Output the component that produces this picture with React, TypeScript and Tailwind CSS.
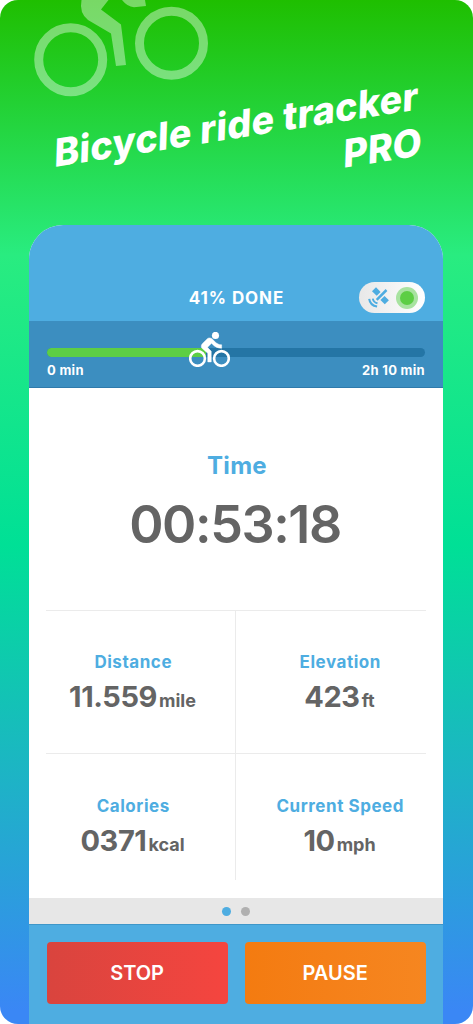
import React from 'react'

const stats = [
    { label: 'Distance', value: '11.559', unit: 'mile' },
    { label: 'Elevation', value: '423', unit: 'ft' },
    { label: 'Calories', value: '0371', unit: 'kcal' },
    { label: 'Current Speed', value: '10', unit: 'mph' },
]

const progress = 42

function Cyclist({ className }: { className?: string }) {
    return (
        <svg viewBox="0 1.5 24 20.5" className={className} fill="none">
            <circle cx="5" cy="17" r="4.3" stroke="currentColor" strokeWidth="1.5" />
            <circle cx="19" cy="17" r="4.3" stroke="currentColor" strokeWidth="1.5" />
            <circle cx="15.5" cy="3.5" r="2.1" fill="currentColor" />
            <path
                d="M10.8 10.5l2.4-2.4.8.8c1.3 1.3 3 2.1 5.1 2.1V9c-1.5 0-2.7-.6-3.6-1.5l-1.9-1.9c-.5-.4-1-.6-1.6-.6s-1.1.2-1.4.6L7.8 8.4c-.4.4-.6.9-.6 1.4 0 .6.2 1.1.6 1.4L11 14v5h2v-6.2z"
                fill="currentColor"
                stroke="currentColor"
                strokeWidth="0.3"
            />
        </svg>
    )
}

function Satellite({ className }: { className?: string }) {
    return (
        <svg viewBox="0 0 21 21" className={className}>
            <g fill="currentColor">
                <path d="M4 4.3L8 .3l4.600 4.600-3.900 3.900z" />
                <path d="M12.400 13l4.100-4.100 4.400 4.400-4.100 4z" />
            </g>
            <g fill="none" stroke="currentColor">
                <path d="M18.5 3L8.7 12.8" strokeWidth="2.5" />
                <path d="M4.8 11.6q.8 3.9 4.7 4.7" strokeWidth="1.9" />
                <path d="M1.2 11.8q.9 6.7 7.9 7.7" strokeWidth="2.1" />
            </g>
        </svg>
    )
}

export default function App() {
    return (
        <div className="h-[1024px] w-[473px] bg-white font-['Inter',sans-serif]">
            <div className="relative flex h-full flex-col overflow-hidden rounded-[18px] bg-[linear-gradient(180deg,#1fbf00_0px,#29ec80_255px,#00e096_545px,#3a87f5_1010px)]">
                <svg viewBox="0 0 240 110" className="absolute left-0 top-0 h-[110px] w-[240px] text-white/40" fill="none">
                    <circle cx="70.7" cy="59.8" r="32" stroke="currentColor" strokeWidth="9" />
                    <circle cx="171.5" cy="43.3" r="32" stroke="currentColor" strokeWidth="9" />
                    <path d="M81.5 0Q79 13 88 20L111 33.5L116 66L126 65L121 24.5L101 9.5L108.5 0Z" fill="currentColor" />
                    <path d="M122 0Q127 6.5 134 7.3L146 6L145 0Z" fill="currentColor" />
                </svg>

                <div className="h-[225px] shrink-0 pt-[101px]">
                    <h1 className="ml-[51px] w-[374px] origin-center -rotate-[9deg] -skew-x-[11deg] whitespace-nowrap text-[38px] font-extrabold leading-[46px] text-white">
                        <span className="flex justify-end pr-[5px] tracking-[0.3px]">Bicycle ride tracker</span>
                        <span className="flex justify-end">PRO</span>
                    </h1>
                </div>

                <div className="mx-[29px] flex w-[414px] flex-1 flex-col overflow-hidden rounded-t-[34px] bg-white">
                    <header className="grid h-24 grid-cols-[1fr_auto_1fr] items-end bg-[#4eade1] px-[18px] pb-2">
                        <span className="col-start-2 pb-1 pl-px text-[17px] font-bold leading-[22px] tracking-[0.9px] text-white">41% DONE</span>
                        <div className="flex h-[31px] w-[66px] items-center justify-between justify-self-end rounded-full bg-linear-to-r from-[#e8e8e8] to-white pl-[9px] pr-[7px]">
                            <Satellite className="size-[21px] text-[#4eade1]" />
                            <div className="flex size-[22px] items-center justify-center rounded-full bg-[#a8e3a0]">
                                <div className="size-[14px] rounded-full bg-[#5dce45]" />
                            </div>
                        </div>
                    </header>

                    <section className="h-[67px] border-b border-[#2f7aab] bg-[#3c8ec0] px-[18px] pt-[27px]">
                        <div className="relative h-[9px] rounded-full bg-[#2475a5]">
                            <div className="h-full rounded-l-full bg-[#5dce45]" style={{ width: `${progress}%` }} />
                            <Cyclist className="absolute -top-4 left-[142px] h-[35px] w-[41px] text-white" />
                        </div>
                        <div className="mt-[5px] flex justify-between text-[13px] font-bold leading-4 tracking-[0.3px] text-white">
                            <span>0 min</span>
                            <span>2h 10 min</span>
                        </div>
                    </section>

                    <section className="mx-[17px] flex h-[223px] flex-col items-center border-b border-[#ebebeb] pt-[63px]">
                        <h2 className="pl-0.5 text-[24px] font-bold leading-[30px] tracking-[0.3px] text-[#4eade1]">Time</h2>
                        <p className="mt-[14px] pr-0.5 text-[52px] font-semibold leading-[60px] tracking-[-1.4px] text-[#646464]">00:53:18</p>
                    </section>

                    <section className="mx-[17px] grid h-[269px] grid-cols-2 grid-rows-[143px_126px]">
                        {stats.map((s, i) => (
                            <div
                                key={s.label}
                                className={`flex flex-col items-center border-[#ebebeb] ${i % 2 === 0 ? 'border-r pr-4' : 'pl-[17px]'} ${i < 2 ? 'border-b pt-10' : 'pt-[41px]'}`}
                            >
                                <h3 className="pl-[1.5px] text-[17px] font-bold leading-[22px] tracking-[0.55px] text-[#4eade1]">{s.label}</h3>
                                <p className="mt-[7px] flex items-baseline gap-0.5 leading-[34px] text-[#646464]">
                                    <span className="text-[29px] font-bold tracking-[-0.4px]">{s.value}</span>
                                    <span className="text-[18px] font-bold">{s.unit}</span>
                                </p>
                            </div>
                        ))}
                    </section>

                    <div className="mt-auto flex h-[26px] items-center justify-center gap-[10px] bg-[#e7e7e7]">
                        <span className="size-[9px] rounded-full bg-[#4eade1]" />
                        <span className="size-[9px] rounded-full bg-[#b0b0b0]" />
                    </div>
                    <footer className="grid h-[100px] shrink-0 grid-cols-2 gap-[17px] border-t border-[#3f97c9] bg-[#4eade1] pl-[17.6px] pr-[17.4px] pt-[17px]">
                        <button className="h-[62px] rounded bg-linear-to-r from-[#d9443e] to-[#f5453f] pb-px text-[20px] font-semibold text-white">STOP</button>
                        <button className="h-[62px] rounded bg-linear-to-r from-[#f47b10] to-[#f68620] text-[20px] font-semibold text-white">PAUSE</button>
                    </footer>
                </div>
            </div>
        </div>
    )
}
